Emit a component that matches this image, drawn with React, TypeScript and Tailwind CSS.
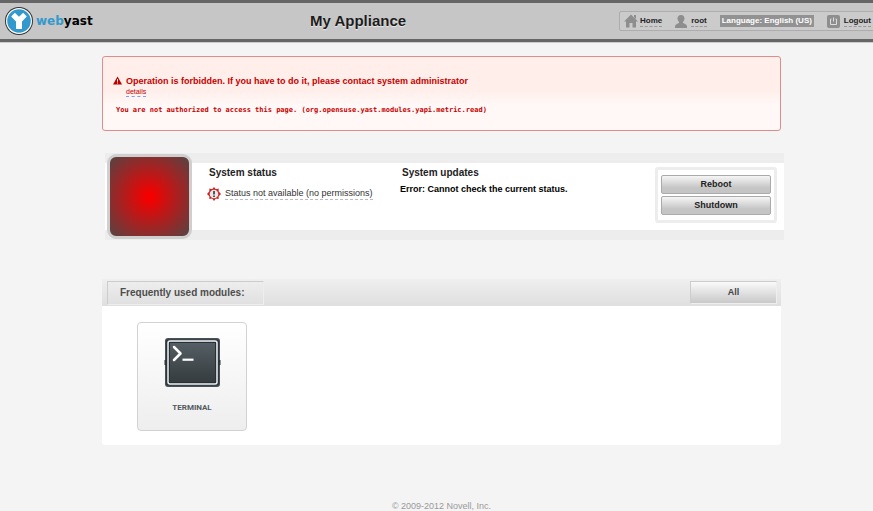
import React from 'react';

const sans = "font-['Liberation_Sans',Arial,sans-serif]";

function Logo() {
  return (
    <a href="#" className="flex w-[310px] items-center gap-[3px] pl-[5px] font-['DejaVu_Sans',sans-serif] text-[12px] font-bold leading-[16px]">
      <svg width="28" height="28" viewBox="0 0 28 28" aria-hidden="true">
        <circle cx="14" cy="14" r="14" fill="#333" />
        <circle cx="14" cy="14" r="13" fill="#fff" />
        <circle cx="14" cy="14" r="11.8" fill="#3399cc" />
        <path d="M6.200 9.500 9.800 5.800 14 9.800 18.200 5.800l3.600 3.700-4.800 5.100V22h-6v-7.400z" fill="#fff" />
      </svg>
      <span className="text-black"><span className="text-[#3399cc]">web</span>yast</span>
    </a>
  );
}

function Nav() {
  const link = 'border-b border-dashed border-[#999] text-[#222]';
  return (
    <nav className="mr-[-8px] flex h-[20px] w-[272px] items-center rounded-[2px] border border-[#adadad] bg-[#cbcbcb] pl-[4px] text-[8px] font-bold leading-[10px]">
      <svg width="14" height="14" viewBox="0 0 14 14" aria-hidden="true" fill="#8e8e8e">
        <path d="M7 0.500 14 7.500h-2V13.500H8.500V9h-3v4.500H2V7.500H0zM10 1h2v4l-2-2z" />
      </svg>
      <a href="#" className={`ml-[2px] ${link}`}>Home</a>
      <svg className="ml-[13px]" width="12" height="13" viewBox="0 0 12 13" aria-hidden="true" fill="#8e8e8e">
        <path d="M6 0c2.300 0 3.500 1.600 3.500 3.500C9.500 5.300 8.600 6 8 7v1c1.800.600 3.500 1.500 4 3v2H0v-2c.500-1.500 2.200-2.400 4-3V7c-.600-1-1.500-1.700-1.500-3.500C2.500 1.600 3.700 0 6 0z" />
      </svg>
      <a href="#" className={`ml-[4px] ${link}`}>root</a>
      <button type="button" className="ml-[13px] h-[12px] w-[94px] whitespace-nowrap bg-[#929292] text-center text-[8px] font-bold leading-[12px] text-white">
        Language: English (US)
      </button>
      <svg className="ml-[13px]" width="13" height="13" viewBox="0 0 13 13" aria-hidden="true">
        <rect width="13" height="13" rx="2" fill="#8e8e8e" />
        <path d="M4.500 4h-1v5.500h6V4h-1M6.500 2.500v4" fill="none" stroke="#ddd" />
      </svg>
      <a href="#" className={`ml-[4px] ${link}`}>Logout</a>
    </nav>
  );
}

function ErrorBox() {
  return (
    <section className="flex h-[75px] flex-col items-start rounded-[3px] border border-[#df8c8c] bg-[linear-gradient(#ffeeea_0%,#ffeeea_45%,#fff8f6_65%,#fff8f6_100%)] pl-[10px] pt-[18px] text-[#c40000]">
      <div className="flex items-start gap-[4px]">
        <svg className="mt-[1px]" width="9" height="9" viewBox="0 0 9 9" aria-hidden="true">
          <path d="M4.500.500 9 8.500H0z" fill="#b80000" />
          <path d="M4.500 3v2.800M4.500 6.500v1" stroke="#fff0ec" />
        </svg>
        <div>
          <h1 className="text-[9px] font-bold leading-[12px]">
            Operation is forbidden. If you have to do it, please contact system administrator
          </h1>
          <a href="#" className="block w-fit border-b border-dashed border-[#7a9fee] text-[7px] leading-[9px]">details</a>
        </div>
      </div>
      <pre className="ml-[3px] mt-[7px] font-['DejaVu_Sans_Mono',monospace] text-[7px] font-bold leading-[12px]">
        You are not authorized to access this page. (org.opensuse.yast.modules.yapi.metric.read)
      </pre>
    </section>
  );
}

function StatusPanel() {
  const button =
    'block w-full rounded-[2px] border border-[#aaa] bg-linear-to-b from-[#f6f6f6] to-[#c5c5c5] to-70% text-center text-[9px] font-bold leading-[17px] text-[#222]';
  return (
    <section className="ml-[3px] mr-[-3px] mt-[22px] flex h-[87px] items-start bg-[linear-gradient(#ededed_10px,#fff_10px,#fff_77px,#ededed_77px)]">
      <div className="ml-[2px] mt-[1px] size-[85px] rounded-[9px] border-[3px] border-[#cfcfcf] bg-[radial-gradient(circle,#f50000_5%,#494949_100%)] bg-origin-border" role="img" aria-label="Status: error" />
      <div className="ml-[17px] w-[191px] pt-[14px]">
        <h2 className="text-[10px] font-bold leading-[12px] text-[#222]">System status</h2>
        <div className="-ml-[2px] mt-[8px] flex items-center gap-[4px]">
          <svg width="14" height="14" viewBox="0 0 14 14" aria-hidden="true">
            <path d="m7 0 1.800 2.200 2.800-.600.100 2.800L14 7l-2.300 2.200-.100 2.800-2.800-.500L7 14l-1.800-2.500-2.800.500-.100-2.800L0 7l2.300-2.600.100-2.800 2.800.600z" fill="#ce2020" />
            <circle cx="7" cy="7" r="4.300" fill="#e8e8e8" />
            <path d="M7 4v3.500M7 8.500V10" stroke="#333" strokeWidth="1.600" />
          </svg>
          <a href="#" className="whitespace-nowrap border-b border-dashed border-[#bbb] text-[9px] leading-[11px] text-[#333]">
            Status not available (no permissions)
          </a>
        </div>
      </div>
      <div className="pl-[2px] pt-[14px]">
        <h2 className="text-[10px] font-bold leading-[12px] text-[#222]">System updates</h2>
        <p className="-ml-[2px] mt-[4px] text-[9px] font-bold leading-[12px] text-black">Error: Cannot check the current status.</p>
      </div>
      <div className="ml-auto mr-[7px] mt-[14px] flex h-[56px] w-[122px] flex-col gap-[2px] rounded-[3px] border-[3px] border-[#ededed] px-[3px] pt-[5px]">
        <button type="button" className={button}>Reboot</button>
        <button type="button" className={button}>Shutdown</button>
      </div>
    </section>
  );
}

function Modules() {
  return (
    <section className="mt-[39px] rounded-b-[3px] bg-white">
      <div className="flex h-[27px] items-start justify-between bg-linear-to-b from-[#efefef] to-[#dfdfdf] pl-[5px] pr-[4px] pt-[2px]">
        <h2 className="h-[24px] w-[157px] border border-b-[#eee] border-l-[#ccc] border-r-[#eee] border-t-[#ccc] pl-[12px] text-[10px] font-bold leading-[22px] text-[#4d4d4d]">
          Frequently used modules:
        </h2>
        <button type="button" className="h-[23px] w-[87px] border border-b-[#eee] border-l-[#ccc] border-r-[#eee] border-t-[#ccc] bg-linear-to-b from-[#fafafa] to-[#c9c9c9] text-[9px] font-bold leading-[21px] text-[#444]">
          All
        </button>
      </div>
      <div className="flex pb-[14px] pl-[35px] pt-[16px]">
        <a href="#" className="flex h-[109px] w-[110px] flex-col items-center rounded-[4px] border border-[#d2d2d2] bg-linear-to-b from-white to-[#eee] pt-[15px]">
          <svg width="57" height="49" viewBox="0 0 57 49" aria-hidden="true">
            <defs>
              <linearGradient id="screen" x1="0" y1="0" x2="0" y2="1">
                <stop offset="0" stopColor="#566066" />
                <stop offset="1" stopColor="#343a3d" />
              </linearGradient>
            </defs>
            <rect x="1" width="55" height="49" rx="3" fill="#475158" />
            <rect x="2" y="1.500" width="53" height="46" rx="2" fill="#2c363b" />
            <path d="M.500 22h2v5h-2zM54.500 22h2v5h-2z" fill="#2c363b" />
            <rect x="4" y="3" width="49" height="43" rx="2" fill="url(#screen)" stroke="#eef1f2" strokeWidth="1.500" />
            <rect x="5.500" y="4.500" width="46" height="40" fill="none" stroke="#273035" />
            <path d="M10 9l6.500 6.500L10 22" fill="none" stroke="#fff" strokeWidth="2.500" strokeLinecap="round" strokeLinejoin="round" />
            <path d="M18.500 21.700h11" stroke="#fff" strokeWidth="2.200" />
          </svg>
          <span className="mt-[16px] font-[Roboto,sans-serif] text-[8px] font-bold leading-[10px] text-[#535a60]">TERMINAL</span>
        </a>
      </div>
    </section>
  );
}

export default function App() {
  return (
    <div className={`min-h-screen overflow-hidden bg-[#f4f4f4] ${sans}`}>
      <div className="min-w-[883px]">
        <header className="flex h-[42px] items-center border-y-[3px] border-[#666] bg-[#c6c6c6] shadow-[0_1px_0_#ccc]">
          <Logo />
          <div className="flex-1 text-[15px] font-bold leading-[20px] text-[#1c1c1c] [text-shadow:0_1px_1px_#eee]">My Appliance</div>
          <Nav />
        </header>
        <main className="mx-auto mt-[14px] w-[679px]">
          <ErrorBox />
          <StatusPanel />
          <Modules />
        </main>
        <footer className="mt-[55px] text-center text-[9px] leading-[12px] text-[#999]">© 2009-2012 Novell, Inc.</footer>
      </div>
    </div>
  );
}
